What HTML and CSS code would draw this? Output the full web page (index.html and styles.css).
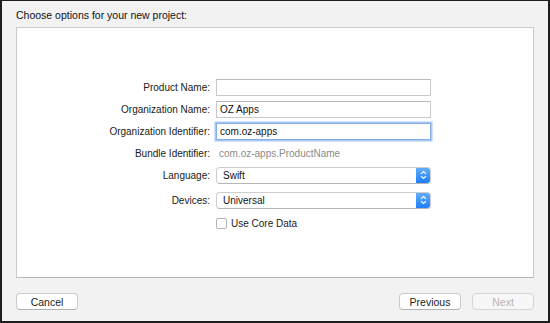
FILE: index.html
```html
<!DOCTYPE html>
<html lang="en">
<head>
    <meta charset="UTF-8">
    <title>Choose options for your new project</title>
    <link rel="stylesheet" href="styles.css">
</head>
<body>
    <div class="window">
        <div class="sheet-title">Choose options for your new project:</div>

        <div class="panel">
            <div class="form">
                <div class="row">
                    <span class="label">Product Name:</span>
                    <div class="field"></div>
                </div>
                <div class="row">
                    <span class="label">Organization Name:</span>
                    <div class="field">OZ Apps</div>
                </div>
                <div class="row">
                    <span class="label">Organization Identifier:</span>
                    <div class="field field-focus">com.oz-apps</div>
                </div>
                <div class="row row-bundle">
                    <span class="label">Bundle Identifier:</span>
                    <span class="static">com.oz-apps.ProductName</span>
                </div>
                <div class="row row-popup">
                    <span class="label">Language:</span>
                    <div class="popup">
                        <span class="popup-text">Swift</span>
                        <span class="stepper">
                            <svg width="7" height="10" viewBox="0 0 7 10"><path d="M1 3.8 L3.5 1.5 L6 3.8 M1 6.2 L3.5 8.5 L6 6.2" fill="none" stroke="#fff" stroke-width="1.1"/></svg>
                        </span>
                    </div>
                </div>
                <div class="row row-popup row-devices">
                    <span class="label">Devices:</span>
                    <div class="popup">
                        <span class="popup-text">Universal</span>
                        <span class="stepper">
                            <svg width="7" height="10" viewBox="0 0 7 10"><path d="M1 3.8 L3.5 1.5 L6 3.8 M1 6.2 L3.5 8.5 L6 6.2" fill="none" stroke="#fff" stroke-width="1.1"/></svg>
                        </span>
                    </div>
                </div>
                <div class="row row-check">
                    <span class="label"></span>
                    <span class="checkbox"></span>
                    <span class="check-text">Use Core Data</span>
                </div>
            </div>
        </div>

        <div class="footer">
            <button class="btn">Cancel</button>
            <div class="footer-right">
                <button class="btn">Previous</button>
                <button class="btn btn-disabled">Next</button>
            </div>
        </div>
    </div>
</body>
</html>
```

FILE: styles.css
```css
body {
    margin: 0;
    font-family: 'Liberation Sans', Arial, sans-serif;
    color: #1c1c1c;
}

.window {
    width: 550px;
    height: 323px;
    box-sizing: border-box;
    border-style: solid;
    border-color: #1e1e1e;
    border-width: 1px 2px 2px 2px;
    background: #f2f2f2;
    padding: 0 14px;
    display: flex;
    flex-direction: column;
}

.sheet-title {
    font-size: 10.5px;
    line-height: 13px;
    padding-top: 8px;
    height: 18px;
    color: #111;
}

.panel {
    height: 251px;
    box-sizing: border-box;
    background: #fff;
    border: 1px solid #cacaca;
    border-bottom-color: #b8b8b8;
}

.form {
    padding-top: 51px;
}

.row {
    display: flex;
    align-items: center;
    height: 17px;
    margin-bottom: 5px;
    font-size: 10px;
}

.label {
    width: 193px;
    flex: none;
    text-align: right;
    margin-right: 6px;
    color: #1a1a1a;
}

.field {
    width: 215px;
    height: 17px;
    box-sizing: border-box;
    border: 1px solid #c9c9c9;
    border-top-color: #b9b9b9;
    padding: 0 3px;
    line-height: 15px;
    font-size: 10px;
    color: #111;
}

.field-focus {
    border-color: #85aee8;
    box-shadow: 0 0 0 1.5px #a9c8f3;
}

.row-bundle {
    height: 16px;
    margin-bottom: 5px;
}

.static {
    color: #8a8a8a;
    padding-left: 3px;
}

.row-popup {
    height: 18px;
    margin-bottom: 7px;
}

.popup {
    width: 215px;
    height: 17px;
    box-sizing: border-box;
    display: flex;
    align-items: center;
    justify-content: space-between;
    background: #fff;
    border: 1px solid #cdcdcd;
    border-bottom-color: #b5b5b5;
    border-radius: 4px;
    overflow: hidden;
}

.popup-text {
    padding-left: 6px;
    font-size: 10px;
    color: #111;
}

.stepper {
    width: 14px;
    height: 100%;
    display: flex;
    align-items: center;
    justify-content: center;
    background: linear-gradient(#64acfa, #1d7ff8);
}

.row-devices {
    margin-bottom: 8px;
}

.row-check {
    height: 13px;
}

.checkbox {
    width: 11px;
    height: 11px;
    box-sizing: border-box;
    border: 1px solid #b3b3b3;
    border-radius: 2px;
    background: #fff;
    margin-right: 4px;
}

.check-text {
    color: #1a1a1a;
}

.footer {
    display: flex;
    justify-content: space-between;
    margin-top: 15px;
}

.footer-right {
    display: flex;
    gap: 11px;
}

.btn {
    width: 62px;
    height: 17px;
    box-sizing: border-box;
    padding: 0;
    background: #fff;
    border: 1px solid #cbcbcb;
    border-bottom-color: #b3b3b3;
    border-radius: 4px;
    font-family: 'Liberation Sans', Arial, sans-serif;
    font-size: 10.5px;
    color: #1c1c1c;
}

.btn-disabled {
    background: #f7f7f7;
    color: #b4b4b4;
    border-color: #d6d6d6;
}
```
